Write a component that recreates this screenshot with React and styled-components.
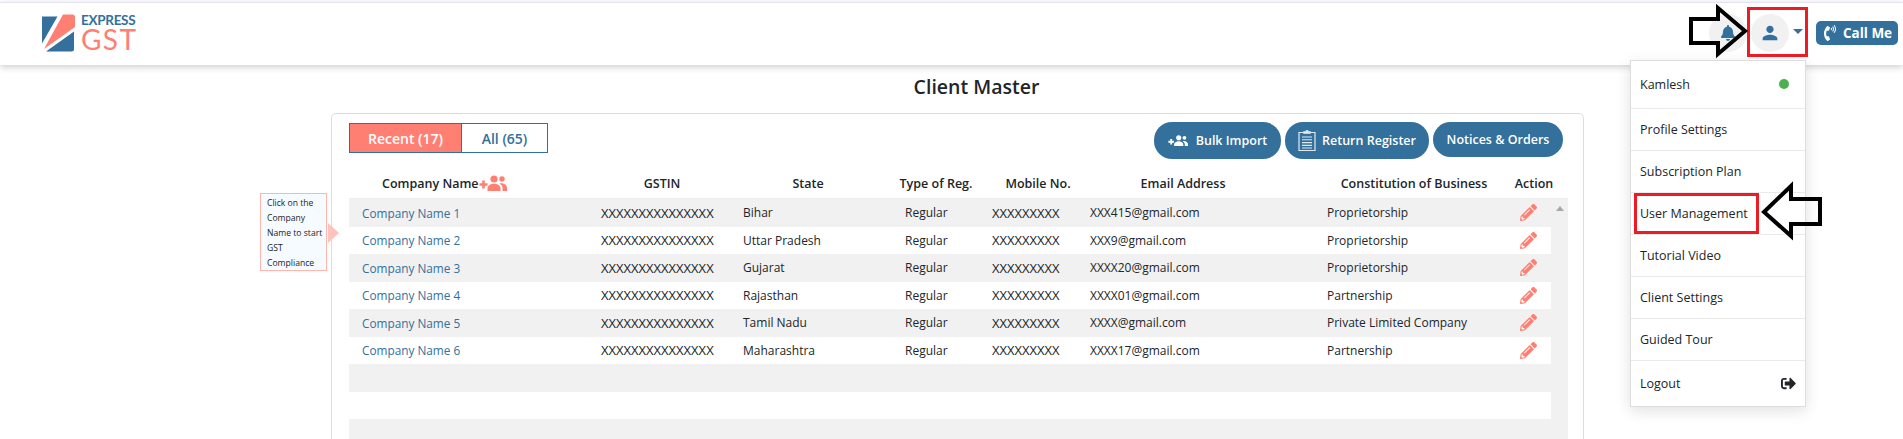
import React from "react";
import styled, { createGlobalStyle } from "styled-components";
import { FaBell, FaPencilAlt, FaPhoneVolume, FaSignOutAlt } from "react-icons/fa";
import { MdPerson } from "react-icons/md";

const blue = "#33709c";
const coral = "#ff7f73";
const font = `"Open Sans", "Noto Sans", sans-serif`;

const headCols = "255px 116px 176px 80px 124px 236px 156px 76px";
const rowCols = "252px 142px 162px 87px 98px 237px 183px 41px";

const rows = [
  ["Company Name 1", "Bihar", "XXX415@gmail.com", "Proprietorship"],
  ["Company Name 2", "Uttar Pradesh", "XXX9@gmail.com", "Proprietorship"],
  ["Company Name 3", "Gujarat", "XXXX20@gmail.com", "Proprietorship"],
  ["Company Name 4", "Rajasthan", "XXXX01@gmail.com", "Partnership"],
  ["Company Name 5", "Tamil Nadu", "XXXX@gmail.com", "Private Limited Company"],
  ["Company Name 6", "Maharashtra", "XXXX17@gmail.com", "Partnership"],
];

const menuItems = [
  "Profile Settings",
  "Subscription Plan",
  "User Management",
  "Tutorial Video",
  "Client Settings",
  "Guided Tour",
];

const GlobalStyle = createGlobalStyle`
  html, body {
    margin: 0;
    height: 100%;
    overflow: hidden;
    background: #fff;
    font-family: ${font};
    color: #212529;
  }
`;

const Page = styled.div`
  position: relative;
  height: 439px;
  overflow: hidden;
`;

const Header = styled.header`
  position: relative;
  z-index: 2;
  box-sizing: border-box;
  height: 63px;
  margin-top: 2px;
  border-top: 1px solid #e4e4f4;
  background: #fff;
  box-shadow: 0 2px 7px rgba(0, 0, 0, 0.2);
  display: flex;
  align-items: center;
  justify-content: space-between;
  padding: 0 5px 3px 41px;
`;

const Brand = styled.div`
  display: flex;
  align-items: center;
  gap: 6px;
`;

const BrandText = styled.div`
  display: flex;
  flex-direction: column;
  gap: 1px;
  font-family: Lato, sans-serif;
`;

const BrandTop = styled.span`
  font-size: 13.5px;
  line-height: 13px;
  font-weight: 700;
  letter-spacing: -0.3px;
  color: ${blue};
`;

const BrandBottom = styled.span`
  font-size: 28px;
  line-height: 23px;
  font-weight: 400;
  letter-spacing: 1.4px;
  color: ${coral};
`;

const HeaderRight = styled.div`
  position: relative;
  display: flex;
  align-items: center;
`;

const RoundIcon = styled.div`
  width: 38px;
  height: 38px;
  border-radius: 50%;
  background: #f1f1f1;
  color: ${blue};
  display: flex;
  align-items: center;
  justify-content: center;
  margin-right: ${(p) => p.$gap}px;
`;

const Caret = styled.span`
  width: 0;
  height: 0;
  border-left: 5px solid transparent;
  border-right: 5px solid transparent;
  border-top: 5px solid ${blue};
  margin: 0 13px 2px 4px;
`;

const CallButton = styled.button`
  width: 82px;
  height: 24px;
  border: 0;
  border-radius: 5px;
  padding: 0;
  background: ${blue};
  color: #fff;
  font-family: ${font};
  font-size: 13.5px;
  font-weight: 700;
  display: flex;
  align-items: center;
  justify-content: center;
  gap: 5px;
`;

const Menu = styled.div`
  position: absolute;
  top: 46px;
  right: 92px;
  width: 174px;
  background: #fff;
  border: 1px solid #ddd;
  box-shadow: 0 4px 14px rgba(0, 0, 0, 0.12);
`;

const MenuItem = styled.div`
  height: ${(p) => p.$height}px;
  box-sizing: border-box;
  padding: 0 9px;
  font-size: 12.5px;
  color: #212529;
  display: flex;
  align-items: center;
  justify-content: space-between;
  & + & {
    border-top: 1px solid #eaeaea;
  }
`;

const OnlineDot = styled.span`
  width: 10px;
  height: 10px;
  margin-right: 7px;
  border-radius: 50%;
  background: #4cb050;
`;

const Main = styled.main``;

const Title = styled.h1`
  margin: 0;
  padding: 8px 0 0 50px;
  height: 39px;
  box-sizing: border-box;
  text-align: center;
  font-size: 19.5px;
  line-height: 28px;
  font-weight: 600;
  color: #212529;
`;

const Card = styled.section`
  position: relative;
  margin: 9px 319px 0 331px;
  height: 400px;
  box-sizing: border-box;
  border: 1px solid #ddd;
  border-radius: 5px;
  padding: 8px 15px 0 17px;
`;

const Toolbar = styled.div`
  display: flex;
  justify-content: space-between;
  align-items: flex-start;
  height: 48px;
`;

const Tabs = styled.div`
  display: flex;
  margin-top: 1px;
`;

const Tab = styled.button`
  width: ${(p) => p.$width}px;
  height: 30px;
  padding: 0;
  box-sizing: border-box;
  border: 1px solid ${blue};
  border-left-width: ${(p) => (p.$active ? 1 : 0)}px;
  background: ${(p) => (p.$active ? coral : "#fff")};
  color: ${(p) => (p.$active ? "#fff" : blue)};
  font-family: ${font};
  font-size: 14px;
  font-weight: 600;
`;

const Actions = styled.div`
  display: flex;
  gap: 4px;
  margin-right: 5px;
`;

const PillButton = styled.button`
  width: ${(p) => p.$width}px;
  height: ${(p) => p.$height}px;
  padding: 0;
  border: 0;
  border-radius: 18px;
  background: ${blue};
  color: #fff;
  font-family: ${font};
  font-size: 12.5px;
  font-weight: 600;
  display: flex;
  align-items: center;
  justify-content: center;
  gap: ${(p) => p.$gap}px;
`;

const HeadRow = styled.div`
  display: grid;
  grid-template-columns: ${headCols};
  height: 28px;
  box-sizing: border-box;
  padding-bottom: 2px;
  align-items: center;
  font-size: 12.5px;
  font-weight: 600;
  white-space: nowrap;
`;

const HeadCell = styled.div`
  text-align: center;
  white-space: nowrap;
  padding-left: ${(p) => p.$left || 0}px;
  padding-right: ${(p) => p.$right || 0}px;
`;

const CompanyHead = styled.div`
  display: flex;
  align-items: center;
  padding-left: 33px;
  color: #212529;
  svg {
    color: ${coral};
  }
`;

const BodyWrap = styled.div`
  display: flex;
  background: #f1f1f1;
  border-top: 1px solid #eee;
`;

const Rows = styled.div`
  width: 1202px;
`;

const Row = styled.div`
  display: grid;
  grid-template-columns: ${rowCols};
  height: 27.5px;
  align-items: center;
  font-size: 12px;
  background: ${(p) => (p.$striped ? "#f1f1f1" : "#fff")};
`;

const CompanyLink = styled.a`
  padding-left: 13px;
  font-size: 11.8px;
  color: ${blue};
  font-weight: 500;
`;

const Cell = styled.div`
  white-space: nowrap;
  font-weight: 500;
`;

const MaskedCell = styled(Cell)`
  font-size: 13px;
`;

const EditCell = styled.div`
  padding-left: 10px;
  display: flex;
  color: ${coral};
`;

const Scrollbar = styled.div`
  flex: 1;
  display: flex;
  justify-content: center;
  padding-top: 7px;
`;

const ScrollArrow = styled.span`
  width: 0;
  height: 0;
  border-left: 4px solid transparent;
  border-right: 4px solid transparent;
  border-bottom: 5px solid #a8a8a8;
`;

const Callout = styled.div`
  position: absolute;
  left: 260px;
  top: 193px;
  width: 67px;
  height: 78px;
  box-sizing: border-box;
  border: 1px solid #ffb4ae;
  background: #f6fbff;
  padding: 2px 0 0 6px;
  font-size: 8.6px;
  line-height: 15px;
  white-space: nowrap;
  &::after {
    content: "";
    position: absolute;
    left: 67px;
    top: 29px;
    border-left: 11px solid #ffc2bd;
    border-top: 10px solid transparent;
    border-bottom: 10px solid transparent;
  }
`;

const Highlight = styled.div`
  position: absolute;
  z-index: 3;
  left: ${(p) => p.$x}px;
  top: ${(p) => p.$y}px;
  width: ${(p) => p.$w}px;
  height: ${(p) => p.$h}px;
  box-sizing: border-box;
  border: 3px solid #ed1c24;
`;

const PointerSvg = styled.svg`
  position: absolute;
  z-index: 3;
  left: 0;
  top: 0;
  pointer-events: none;
`;

const Logo = () => (
  <svg width="34" height="38" viewBox="0 0 34 38">
    <path d="M1 2.5h15.5L1 29.5z" fill={blue} />
    <path d="M22 .5h9.5q2.5 0 2.5 2.5v10L3 35z" fill={coral} />
    <path d="M33 17.5V35q0 2.5-2.5 2.5H5z" fill={blue} />
  </svg>
);

// plus sign on the left, one person in front and one half hidden behind
const GroupAddIcon = ({ width }) => (
  <svg width={width} viewBox="0 0 28 16" fill="currentColor">
    <path d="M3.200 5.500h2.600v2.700h2.700v2.500H5.800v2.700H3.200v-2.700H.5V8.200h2.700z" />
    <circle cx="15" cy="4" r="3.600" />
    <path d="M8.500 16v-2.500c0-3 3-4.800 6.500-4.800s6.500 1.800 6.500 4.800V16z" />
    <circle cx="23" cy="4" r="2.700" />
    <path d="M20.500 8.600c3.500-.9 7.500.9 7.500 4.400V16h-4.500v-3c0-1.800-1.200-3.300-3-4.400z" />
  </svg>
);

const ClipboardIcon = () => (
  <svg width="18" height="21" viewBox="0 0 18 21" fill="none" stroke="#dfe9f0">
    <path d="M5.500 2.500H1v18h16v-18h-4.500" strokeWidth="1.2" />
    <path d="M5.500 3.500V1.500h2l.5-1h2l.5 1h2v2z" fill="#dfe9f0" strokeWidth="0.6" />
    <path d="M4 7h10M4 9.800h10M4 12.600h10M4 15.400h10M4 18h10" strokeWidth="1.1" />
  </svg>
);

const Pointers = () => (
  <PointerSvg width="1903" height="439" fill="none" stroke="#000" strokeWidth="4" strokeLinejoin="miter">
    <path d="M1691 19h27V8l27 23-27 23V43h-27z" />
    <path d="M1764 212l27-26v13h29v25h-29v12z" />
  </PointerSvg>
);

export default function App() {
  return (
    <Page>
      <GlobalStyle />
      <Header>
        <Brand>
          <Logo />
          <BrandText>
            <BrandTop>EXPRESS</BrandTop>
            <BrandBottom>GST</BrandBottom>
          </BrandText>
        </Brand>
        <HeaderRight>
          <RoundIcon $gap={4}>
            <FaBell size={16} />
          </RoundIcon>
          <RoundIcon $gap={0}>
            <MdPerson size={22} />
          </RoundIcon>
          <Caret />
          <CallButton>
            <FaPhoneVolume size={16} />
            Call Me
          </CallButton>
          <Menu>
            <MenuItem $height={47}>
              Kamlesh
              <OnlineDot />
            </MenuItem>
            {menuItems.map((item) => (
              <MenuItem key={item} $height={42}>
                {item}
              </MenuItem>
            ))}
            <MenuItem $height={46}>
              Logout
              <FaSignOutAlt size={15} />
            </MenuItem>
          </Menu>
        </HeaderRight>
      </Header>

      <Main>
        <Title>Client Master</Title>
        <Card>
          <Toolbar>
            <Tabs>
              <Tab $active $width={113}>Recent (17)</Tab>
              <Tab $width={86}>All (65)</Tab>
            </Tabs>
            <Actions>
              <PillButton $width={127} $height={37} $gap={8}>
                <GroupAddIcon width={20} />
                Bulk Import
              </PillButton>
              <PillButton $width={144} $height={37} $gap={6}>
                <ClipboardIcon />
                Return Register
              </PillButton>
              <PillButton $width={130} $height={35} $gap={0}>
                Notices &amp; Orders
              </PillButton>
            </Actions>
          </Toolbar>
          <HeadRow>
            <CompanyHead>
              Company Name
              <GroupAddIcon width={28} />
            </CompanyHead>
            <HeadCell>GSTIN</HeadCell>
            <HeadCell>State</HeadCell>
            <HeadCell>Type of Reg.</HeadCell>
            <HeadCell>Mobile No.</HeadCell>
            <HeadCell $right={70}>Email Address</HeadCell>
            <HeadCell>Constitution of Business</HeadCell>
            <HeadCell $left={8}>Action</HeadCell>
          </HeadRow>
          <BodyWrap>
            <Rows>
              {rows.map(([name, state, email, type], i) => (
                <Row key={name} $striped={i % 2 === 0}>
                  <CompanyLink>{name}</CompanyLink>
                  <MaskedCell>XXXXXXXXXXXXXXX</MaskedCell>
                  <Cell>{state}</Cell>
                  <Cell>Regular</Cell>
                  <MaskedCell>XXXXXXXXX</MaskedCell>
                  <Cell>{email}</Cell>
                  <Cell>{type}</Cell>
                  <EditCell>
                    <FaPencilAlt size={17} />
                  </EditCell>
                </Row>
              ))}
              <Row $striped />
              <Row />
              <Row $striped />
            </Rows>
            <Scrollbar>
              <ScrollArrow />
            </Scrollbar>
          </BodyWrap>
        </Card>
      </Main>

      <Callout>
        Click on the
        <br />
        Company
        <br />
        Name to start
        <br />
        GST
        <br />
        Compliance
      </Callout>
      <Highlight $x={1747} $y={7} $w={61} $h={50} />
      <Highlight $x={1634} $y={193} $w={125} $h={41} />
      <Pointers />
    </Page>
  );
}
